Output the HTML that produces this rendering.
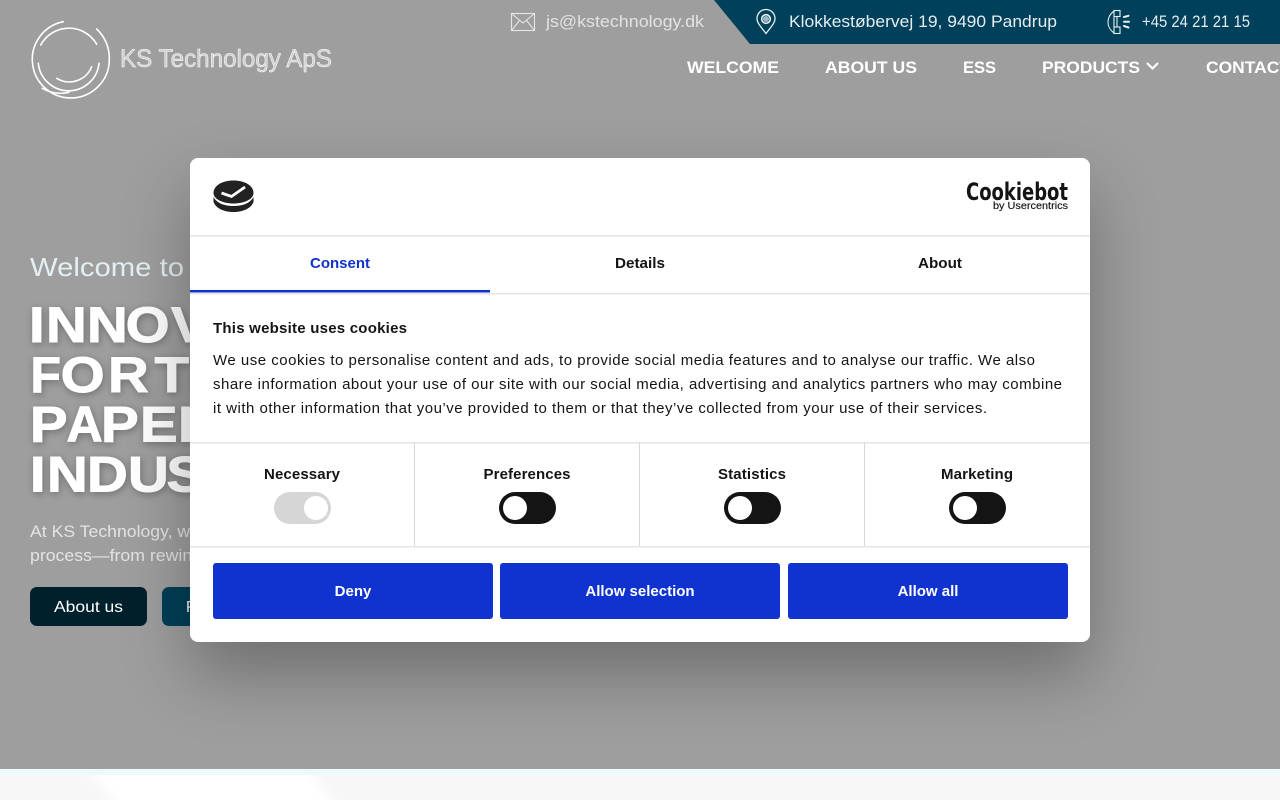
<!DOCTYPE html>
<html lang="en">
<head>
<meta charset="utf-8">
<title>KS Technology ApS</title>
<style>
html,body{margin:0;padding:0;width:1280px;height:800px;overflow:hidden;background:#f7f7f7;font-family:"Liberation Sans",sans-serif}
.hero{position:absolute;left:0;top:0;width:1280px;height:769px;background:#9e9e9e}
.band{position:absolute;left:0;top:769px;width:1280px;height:6px;background:#ecf9fd}
.low{position:absolute;left:0;top:775px;width:1280px;height:25px;background:#f7f7f7;overflow:hidden}
.layer{position:absolute;left:0;top:0}
.dialog{position:absolute;left:190px;top:158px;width:900px;height:484px;background:#fff;border-radius:8px;box-shadow:0 32px 68px rgba(0,0,0,.3)}
text{font-family:"Liberation Sans",sans-serif}
</style>
</head>
<body>
<div class="hero"></div>
<div class="band"></div>
<div class="low">
<svg width="1280" height="25"><defs><filter id="b" x="-20%" y="-50%" width="140%" height="200%"><feGaussianBlur stdDeviation="6"/></filter></defs><polygon points="70,-30 292,-30 342,40 125,40" fill="#fff" filter="url(#b)"/></svg>
</div>

<svg class="layer" width="1280" height="800" viewBox="0 0 1280 800">
<defs><filter id="ts" x="-10%" y="-30%" width="120%" height="160%"><feDropShadow dx="1" dy="2" stdDeviation="4" flood-color="#000" flood-opacity=".3"/></filter></defs>
<polygon points="714,0 750,44 1280,44 1280,0" fill="#00405a"/>

<!-- logo -->
<g fill="none" stroke="#fff" stroke-width="1.6" stroke-linecap="round">
<path d="M63.300 21.700A38.500 38.500 0 1 0 109.300 59.700A40 40 0 0 0 96.700 29"/>
<path d="M40.700 45A32 32 0 0 1 96.700 44.300"/>
<path d="M38.300 63.300A30.500 30.500 0 0 0 99 63.300"/>
<path d="M56.700 78.300A24 24 0 0 0 91.700 66.700"/>
<path d="M42.300 88.300A37 37 0 0 0 69 92.300"/>
</g>
<text x="120" y="67" font-size="25" textLength="212" lengthAdjust="spacingAndGlyphs" fill="#fff" fill-opacity=".5" stroke="#fff" stroke-width=".5">KS Technology ApS</text>

<!-- envelope -->
<g fill="none" stroke="#e6e6e6" stroke-width="1.1">
<rect x="511.500" y="13.500" width="23" height="17"/>
<path d="M511.500 13.500L523 23L534.500 13.500M511.500 30.500L519.500 20.500M534.500 30.500L526.500 20.500"/>
</g>
<text x="546" y="27" font-size="17" textLength="158" lengthAdjust="spacingAndGlyphs" fill="#e2e2e2">js@kstechnology.dk</text>

<!-- pin -->
<g fill="none" stroke="#e8f0f3" stroke-width="1.3">
<path d="M766 33.500C761 27 757 23 757 18.500A9 9 0 0 1 775 18.500C775 23 771 27 766 33.500Z"/>
<circle cx="766" cy="19" r="4.300" stroke-width="1.600"/>
</g>
<circle cx="766" cy="19" r="3" fill="#9fb9c4"/>
<text x="789" y="27" font-size="17" textLength="268" lengthAdjust="spacingAndGlyphs" fill="#e4edf0">Klokkestøbervej 19, 9490 Pandrup</text>

<!-- phone -->
<g fill="none" stroke="#e8f0f3" stroke-width="1.100">
<path d="M1114 11C1110 14 1108 18 1108 22C1108 27 1110 30 1114 33"/>
<rect x="1114" y="10.500" width="6" height="6"/>
<rect x="1114" y="27" width="6" height="6.500"/>
<path d="M1114 16.500V27M1117 16.500V27"/>
</g>
<g stroke="#e8f0f3" stroke-width="2" stroke-linecap="round">
<path d="M1124 17L1128.500 15.800M1124 21.700H1129M1124 26L1128.500 27.500"/>
</g>
<text x="1142" y="27" font-size="17" textLength="108" lengthAdjust="spacingAndGlyphs" fill="#e4edf0">+45 24 21 21 15</text>

<!-- nav -->
<g font-size="17" font-weight="700" fill="#fff">
<text x="687" y="73" textLength="92" lengthAdjust="spacingAndGlyphs">WELCOME</text>
<text x="825" y="73" textLength="92" lengthAdjust="spacingAndGlyphs">ABOUT US</text>
<text x="963" y="73" textLength="33" lengthAdjust="spacingAndGlyphs">ESS</text>
<text x="1042" y="73" textLength="98" lengthAdjust="spacingAndGlyphs">PRODUCTS</text>
<text x="1206" y="73" textLength="84" lengthAdjust="spacingAndGlyphs">CONTACT</text>
</g>
<path d="M1147 63L1152.500 68.500L1158 63" fill="none" stroke="#fff" stroke-width="2.200"/>

<!-- hero -->
<text x="30" y="276" font-size="26" textLength="154" lengthAdjust="spacingAndGlyphs" fill="#e4eff3">Welcome to</text>
<g filter="url(#ts)" font-size="50" font-weight="700" fill="#fff" stroke="#fff" stroke-width=".9">
<g transform="scale(1.13,1)">
<text x="25.700 40.700 77 111.200 151.300 185" y="342">INNOVATION</text>
<text x="53.700 95.600 125 136.700" y="392">OR THE</text>
<text x="26.500" y="441.500">P</text>
<text x="89.400 123.900 157.500" y="441.500">PER</text>
<text x="26.500 41.600 77 113.300 147.300" y="491.500">INDUSTRY</text>
</g>
<text x="30.400" y="392">F</text>
<text x="66.500" y="441.500">A</text>
</g>
<text x="30" y="537" font-size="17" textLength="170" lengthAdjust="spacingAndGlyphs" fill="#e3e3e3">At KS Technology, we</text>
<text x="30" y="561" font-size="17" textLength="172" lengthAdjust="spacingAndGlyphs" fill="#e3e3e3">process—from rewind</text>
<rect x="30" y="587" width="117" height="39" rx="7" fill="#00202c"/>
<text x="54" y="612" font-size="16" textLength="69" lengthAdjust="spacingAndGlyphs" fill="#fff">About us</text>
<rect x="162" y="587" width="100" height="39" rx="7" fill="#003f58"/>
<text x="186" y="612" font-size="16" textLength="60" lengthAdjust="spacingAndGlyphs" fill="#fff">Products</text>
</svg>

<div class="dialog"></div>

<svg class="layer" width="1280" height="800" viewBox="0 0 1280 800">
<!-- cookie icon -->
<path d="M213.500 193C213.500 185.500 222.500 180.500 233.500 180.500S253.500 185.500 253.500 193C253.500 199 244.500 203.500 233.500 203.500S213.500 199 213.500 193Z" fill="#222"/>
<path d="M213.500 197C217 203.500 225 206 233.500 206S250 203.500 253.500 197V202C251 208.500 243 212 233.500 212S216 208.500 213.500 202Z" fill="#222"/>
<path d="M221.500 193L231.500 196.500L245 187" fill="none" stroke="#fff" stroke-width="2.800"/>
<!-- cookiebot -->
<text x="966" y="200" font-size="24" font-weight="700" textLength="102" lengthAdjust="spacingAndGlyphs" fill="#141414" style="font-family:'DejaVu Sans',sans-serif">Cookiebot</text>
<text x="993" y="209" font-size="10" textLength="75" lengthAdjust="spacingAndGlyphs" fill="#141414" stroke="#141414" stroke-width=".15">by Usercentrics</text>

<!-- lines -->
<rect x="190" y="235" width="900" height="1.500" fill="#e4e4e4"/>
<rect x="190" y="293" width="900" height="1.500" fill="#e4e4e4"/>
<rect x="190" y="290" width="300" height="2.500" fill="#1032cf"/>
<rect x="190" y="442" width="900" height="1.500" fill="#e4e4e4"/>
<rect x="190" y="546" width="900" height="1.500" fill="#e4e4e4"/>
<rect x="414" y="443" width="1" height="103" fill="#d8d8d8"/>
<rect x="639" y="443" width="1" height="103" fill="#d8d8d8"/>
<rect x="864" y="443" width="1" height="103" fill="#d8d8d8"/>

<!-- tabs -->
<g font-size="15" font-weight="700" text-anchor="middle">
<text x="340" y="268" fill="#1032cf" textLength="60" lengthAdjust="spacingAndGlyphs">Consent</text>
<text x="640" y="268" fill="#141414" textLength="50" lengthAdjust="spacingAndGlyphs">Details</text>
<text x="940" y="268" fill="#141414" textLength="44" lengthAdjust="spacingAndGlyphs">About</text>
</g>

<!-- body -->
<text x="213" y="333" font-size="15" font-weight="700" textLength="194" lengthAdjust="spacing" fill="#141414">This website uses cookies</text>
<g font-size="15" fill="#141414">
<text x="213" y="365" textLength="822" lengthAdjust="spacing">We use cookies to personalise content and ads, to provide social media features and to analyse our traffic. We also</text>
<text x="213" y="389" textLength="849" lengthAdjust="spacing">share information about your use of our site with our social media, advertising and analytics partners who may combine</text>
<text x="213" y="413" textLength="774" lengthAdjust="spacing">it with other information that you’ve provided to them or that they’ve collected from your use of their services.</text>
</g>

<!-- toggles -->
<g font-size="15" font-weight="700" fill="#141414" text-anchor="middle">
<text x="302" y="479" textLength="76" lengthAdjust="spacing">Necessary</text>
<text x="527" y="479" textLength="87" lengthAdjust="spacing">Preferences</text>
<text x="752" y="479" textLength="68" lengthAdjust="spacing">Statistics</text>
<text x="977" y="479" textLength="72" lengthAdjust="spacing">Marketing</text>
</g>
<rect x="274" y="492" width="57" height="32" rx="16" fill="#d6d6d6"/><circle cx="316" cy="508" r="12" fill="#fff"/>
<rect x="499" y="492" width="57" height="32" rx="16" fill="#141414"/><circle cx="515" cy="508" r="12" fill="#fff"/>
<rect x="724" y="492" width="57" height="32" rx="16" fill="#141414"/><circle cx="740" cy="508" r="12" fill="#fff"/>
<rect x="949" y="492" width="57" height="32" rx="16" fill="#141414"/><circle cx="965" cy="508" r="12" fill="#fff"/>

<!-- buttons -->
<rect x="213" y="563" width="280" height="56" rx="3" fill="#1032cf"/>
<rect x="500" y="563" width="280" height="56" rx="3" fill="#1032cf"/>
<rect x="788" y="563" width="280" height="56" rx="3" fill="#1032cf"/>
<g font-size="15" font-weight="700" fill="#fff" text-anchor="middle">
<text x="353" y="596">Deny</text>
<text x="640" y="596">Allow selection</text>
<text x="928" y="596">Allow all</text>
</g>
</svg>
</body>
</html>
